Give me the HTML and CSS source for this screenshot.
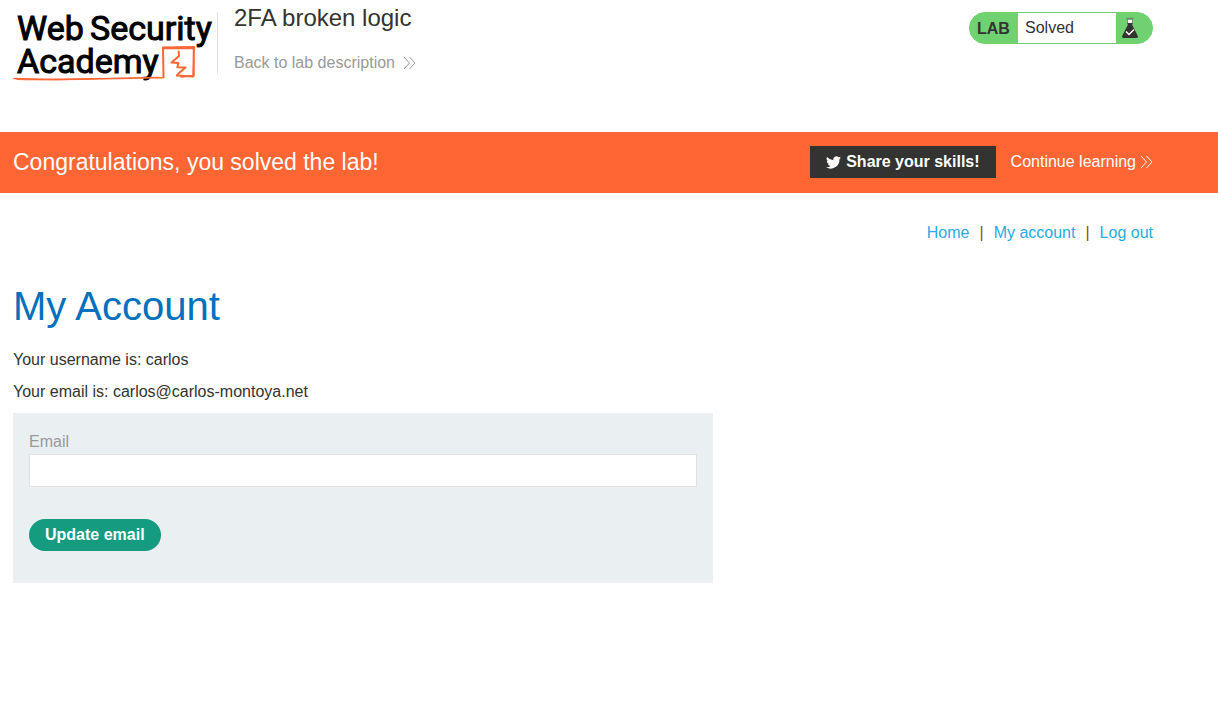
FILE: index.html
```html
<!DOCTYPE html>
<html lang="en">
<head>
<meta charset="utf-8">
<meta name="viewport" content="width=device-width, initial-scale=1">
<title>2FA broken logic</title>
<link rel="stylesheet" href="styles.css">
</head>
<body>
<header class="lab-header container">
  <a class="logo" href="#" aria-label="Web Security Academy">
    <svg class="logo-art" width="204" height="72" viewBox="0 0 204 72">
      <g class="logo-text">
        <text x="4" y="28">Web</text>
        <text x="77" y="28">Security</text>
        <text x="4" y="61">Academy</text>
      </g>
      <g fill="none" stroke="#ff6633" stroke-linecap="round" stroke-linejoin="round">
        <path stroke-width="1.6" d="M1 66.500C30 68 60 67.500 100 66.500C120 66 138 65.500 149 65.700"/>
        <path stroke-width="1.200" d="M4 67.500C40 68.500 75 66.500 102 66.500"/>
        <path stroke-width="2" d="M150.500 65.500L150 35.500L181 35L180.200 64.500L164 63.500"/>
        <path stroke-width="1.400" d="M151 36.500L180.500 36.500L181 63.500L168 65"/>
        <path stroke-width="2" d="M165.700 39.500L166 44L158.500 50.500L165.500 51L164.300 55.200L172.500 55.500L165.500 61.500L164 63.500"/>
      </g>
    </svg>
  </a>
  <div class="title-block">
    <h2 class="lab-title">2FA broken logic</h2>
    <a class="back-link" href="#">Back to lab description
      <svg class="chevrons" width="13" height="14" viewBox="0 0 13 14"><path d="M1 1l5.500 6L1 13M6.500 1L12 7l-5.500 6"/></svg>
    </a>
  </div>
  <div class="lab-status">
    <span class="status-tag">LAB</span>
    <p class="status-text">Solved</p>
    <span class="status-icon">
      <svg width="18" height="22" viewBox="0 0 18 22">
        <path d="M6.500 3h5v6H6.500z" fill="#fff"/>
        <path d="M5.500 1.500h7" stroke="#777" stroke-width="1.500"/>
        <path d="M6.500 2v5M11.500 2v5" stroke="#888" stroke-width="1"/>
        <path d="M6.500 6h5v2.500l5.200 10.300q.8 2.200-1.500 2.200H2.800q-2.300 0-1.500-2.200L6.500 8.500z" fill="#333332"/>
        <path d="M5 14.500l3 3 5-5" fill="none" stroke="#fff" stroke-width="1.500"/>
      </svg>
    </span>
  </div>
</header>

<section class="banner">
  <div class="banner-row container">
    <h4 class="banner-title">Congratulations, you solved the lab!</h4>
    <a class="share" href="#">
      <svg width="15" height="13" viewBox="0 0 24 20"><path fill="#fff" d="M24 2.400a9.800 9.800 0 0 1-2.800.8A4.900 4.900 0 0 0 23.300.5a9.900 9.900 0 0 1-3.100 1.200 4.900 4.900 0 0 0-8.400 4.500A14 14 0 0 1 1.700 1a4.900 4.900 0 0 0 1.500 6.600 4.900 4.900 0 0 1-2.200-.6v.1a4.900 4.900 0 0 0 3.900 4.800 4.900 4.900 0 0 1-2.200.1 4.900 4.900 0 0 0 4.600 3.400A9.900 9.900 0 0 1 0 17.500 14 14 0 0 0 21.500 5v-.1A10 10 0 0 0 24 2.400z"/></svg>
      Share your skills!</a>
    <a class="continue" href="#">Continue learning
      <svg class="chevrons" width="13" height="14" viewBox="0 0 13 14"><path d="M1 1l5.500 6L1 13M6.500 1L12 7l-5.500 6"/></svg>
    </a>
  </div>
</section>

<main class="page container">
  <nav class="links" aria-label="Account">
    <a href="#">Home</a><span>|</span><a href="#">My account</a><span>|</span><a href="#">Log out</a>
  </nav>
  <h1 class="heading">My Account</h1>
  <p class="line">Your username is: carlos</p>
  <p class="line">Your email is: carlos@carlos-montoya.net</p>
  <form class="email-form">
    <label class="label" for="email">Email</label>
    <input class="field" id="email" type="email" name="email">
    <button class="submit" type="submit">Update email</button>
  </form>
</main>
</body>
</html>
```
FILE: styles.css
```css
* {
  box-sizing: border-box;
}

body {
  margin: 0;
  background: #fff;
  color: #333332;
  font: 16px/24px "Liberation Sans", Arial, sans-serif;
}

h1, h2, h4, p {
  margin: 0;
  font-weight: 400;
}

a {
  text-decoration: none;
}

.container {
  max-width: 1140px;
  margin: 0 13px;
}

.lab-header {
  display: flex;
  align-items: flex-start;
  padding: 12px 0 48px;
}

.logo {
  display: flex;
  height: 72px;
}

.logo-art {
  overflow: visible;
}

.logo-text {
  font: 400 34px Roboto, sans-serif;
  fill: #000;
  stroke: #000;
  stroke-width: 1px;
}

.title-block {
  display: flex;
  flex-direction: column;
  gap: 19px;
  height: 62px;
  padding-left: 16px;
  border-left: 1px solid #e1e1e1;
}

.lab-title {
  margin-top: -8px;
  font-size: 24px;
  line-height: 28px;
}

.back-link {
  display: flex;
  align-items: center;
  gap: 8px;
  color: #999;
}

.chevrons {
  fill: none;
  stroke: currentColor;
  stroke-width: 1;
}

.lab-status {
  display: flex;
  width: 184px;
  height: 32px;
  margin-left: auto;
  overflow: hidden;
  border: 1px solid #6fd16f;
  border-radius: 16px;
  background: #6fd16f;
  line-height: 30px;
}

.status-tag {
  width: 48px;
  padding-left: 7px;
  font-weight: 700;
  line-height: 32px;
}

.status-text {
  flex: 1;
  padding-left: 7px;
  background: #fff;
}

.status-icon {
  display: flex;
  align-items: center;
  width: 36px;
  padding-left: 5px;
}

.banner {
  background: #ff6633;
  color: #fff;
}

.banner-row {
  display: flex;
  align-items: center;
  padding: 14px 0 15px;
}

.banner-title {
  flex: 1;
  font-size: 23px;
  line-height: 32px;
}

.share {
  display: flex;
  align-items: center;
  gap: 5px;
  padding: 0 16px;
  background: #333332;
  color: #fff;
  font-weight: 700;
  line-height: 32px;
}

.continue {
  display: flex;
  align-items: center;
  gap: 4px;
  margin-left: 15px;
  color: #fff;
}

.links {
  display: flex;
  justify-content: flex-end;
  gap: 10px;
  padding-top: 28px;
}

.links a {
  color: #29abe2;
}

.links span {
  color: #a0460a;
}

.heading {
  margin: 36px 0 17px;
  color: #0071bc;
  font-size: 40px;
  line-height: 50px;
}

.line {
  margin-bottom: 8px;
  line-height: 24px;
}

.email-form {
  max-width: 700px;
  margin-top: 9px;
  padding: 16px 16px 32px;
  background: #eaeff2;
}

.label {
  display: block;
  color: #999;
  line-height: 25px;
}

.field {
  display: block;
  width: 100%;
  height: 33px;
  padding: 0 8px;
  border: 1px solid #e1e1e1;
  background: #fff;
  font: inherit;
}

.submit {
  display: block;
  height: 32px;
  margin-top: 32px;
  padding: 0 16px;
  border: 0;
  border-radius: 16px;
  background: #159c80;
  color: #fff;
  font: inherit;
  font-weight: 700;
}
```
